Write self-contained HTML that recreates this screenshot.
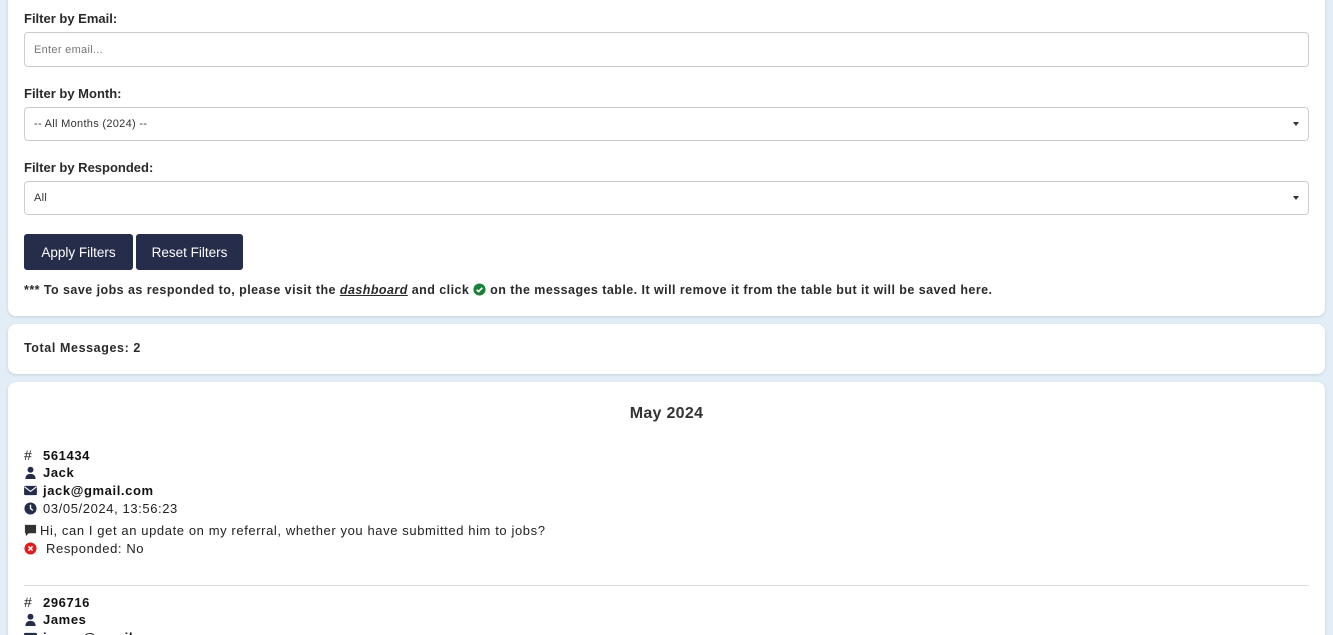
<!DOCTYPE html>
<html><head><meta charset="utf-8"><style>
*{box-sizing:border-box;margin:0;padding:0}
html,body{width:1333px;height:635px;overflow:hidden}
body{background:#e2edf7;font-family:"Liberation Sans",sans-serif;color:#222;position:relative}
.card{position:absolute;left:8px;width:1317px;background:#fff;border-radius:8px;box-shadow:0 1px 3px rgba(0,0,0,.12)}
.lbl{position:absolute;left:24px;font-size:13px;font-weight:bold;color:#2a2a2a}
.inp{position:absolute;left:24px;width:1285px;border:1px solid #ccc;border-radius:4px;font-size:11px;color:#333;padding-left:9px;display:flex;align-items:center;letter-spacing:0.3px}
.arrow{position:absolute;right:9px;top:50%;margin-top:-2px;border-left:3px solid transparent;border-right:3px solid transparent;border-top:4px solid #333}
.btn{position:absolute;top:234px;height:36px;background:#262d4a;color:#fff;font-size:13.5px;border-radius:3px;display:flex;align-items:center;justify-content:center}
.row{position:absolute;left:24px;font-size:13px;display:flex;align-items:center;gap:6px;letter-spacing:0.6px}
.b{font-weight:bold;color:#111}
</style></head><body>
<div class="card" style="top:-10px;height:326px"></div>
<div class="lbl" style="top:11px">Filter by Email:</div>
<div class="inp" style="top:32px;height:35px;color:#777">Enter email...</div>
<div class="lbl" style="top:86px">Filter by Month:</div>
<div class="inp" style="top:107px;height:34px">-- All Months (2024) --<span class="arrow"></span></div>
<div class="lbl" style="top:160px">Filter by Responded:</div>
<div class="inp" style="top:181px;height:34px">All<span class="arrow"></span></div>
<div class="btn" style="left:24px;width:109px">Apply Filters</div>
<div class="btn" style="left:136px;width:107px">Reset Filters</div>
<div class="lbl" style="top:283px;font-size:12.5px;letter-spacing:0.45px">*** To save jobs as responded to, please visit the <i style="text-decoration:underline">dashboard</i> and click <svg width="13" height="13" viewBox="0 0 14 14" style="vertical-align:-2px"><circle cx="7" cy="7" r="6.5" fill="#188038"/><path d="M4 7.2l2 2 4-4" stroke="#fff" stroke-width="1.8" fill="none"/></svg> on the messages table. It will remove it from the table but it will be saved here.</div>

<div class="card" style="top:324px;height:50px"></div>
<div class="lbl" style="top:341px;font-size:12.5px;letter-spacing:0.6px">Total Messages: 2</div>

<div class="card" style="top:382px;height:270px"></div>
<div style="position:absolute;top:405px;left:0;width:1333px;text-align:center;font-size:16px;font-weight:bold;color:#333;letter-spacing:0.3px">May 2024</div>

<div class="row" style="top:447px"><span style="width:13px;font-size:14px">#</span><span class="b">561434</span></div>
<div class="row" style="top:465px"><svg width="13" height="13" viewBox="0 0 14 14"><circle cx="7" cy="4" r="3.2" fill="#262d4a"/><path d="M1.5 14c0-4 2.5-5.5 5.5-5.5s5.5 1.5 5.5 5.5z" fill="#262d4a"/></svg><span class="b">Jack</span></div>
<div class="row" style="top:483px"><svg width="13" height="11" viewBox="0 0 14 12"><rect x="0" y="1" width="14" height="10" rx="1" fill="#262d4a"/><path d="M0.5 2l6.5 5 6.5-5" stroke="#fff" stroke-width="1.3" fill="none"/></svg><span class="b">jack@gmail.com</span></div>
<div class="row" style="top:501px"><svg width="13" height="13" viewBox="0 0 14 14"><circle cx="7" cy="7" r="6.5" fill="#262d4a"/><path d="M7 3v4l2.5 2" stroke="#fff" stroke-width="1.5" fill="none"/></svg><span>03/05/2024, 13:56:23</span></div>
<div class="row" style="top:523px;gap:3px"><svg width="13" height="13" viewBox="0 0 14 14"><path d="M1 1h12v9H5l-3 3v-3H1z" fill="#333"/></svg><span>Hi, can I get an update on my referral, whether you have submitted him to jobs?</span></div>
<div class="row" style="top:541px;gap:9px"><svg width="13" height="13" viewBox="0 0 14 14"><circle cx="7" cy="7" r="6.5" fill="#e01b1b"/><path d="M4.8 4.8l4.4 4.4M9.2 4.8l-4.4 4.4" stroke="#fff" stroke-width="1.6"/></svg><span>Responded: No</span></div>
<div style="position:absolute;top:585px;left:24px;width:1285px;border-top:1px solid #ddd"></div>
<div class="row" style="top:594px"><span style="width:13px;font-size:14px">#</span><span class="b">296716</span></div>
<div class="row" style="top:612px"><svg width="13" height="13" viewBox="0 0 14 14"><circle cx="7" cy="4" r="3.2" fill="#262d4a"/><path d="M1.5 14c0-4 2.5-5.5 5.5-5.5s5.5 1.5 5.5 5.5z" fill="#262d4a"/></svg><span class="b">James</span></div>
<div class="row" style="top:630px"><svg width="13" height="11" viewBox="0 0 14 12"><rect x="0" y="1" width="14" height="10" rx="1" fill="#262d4a"/></svg><span class="b">james@gmail.com</span></div>
</body></html>
